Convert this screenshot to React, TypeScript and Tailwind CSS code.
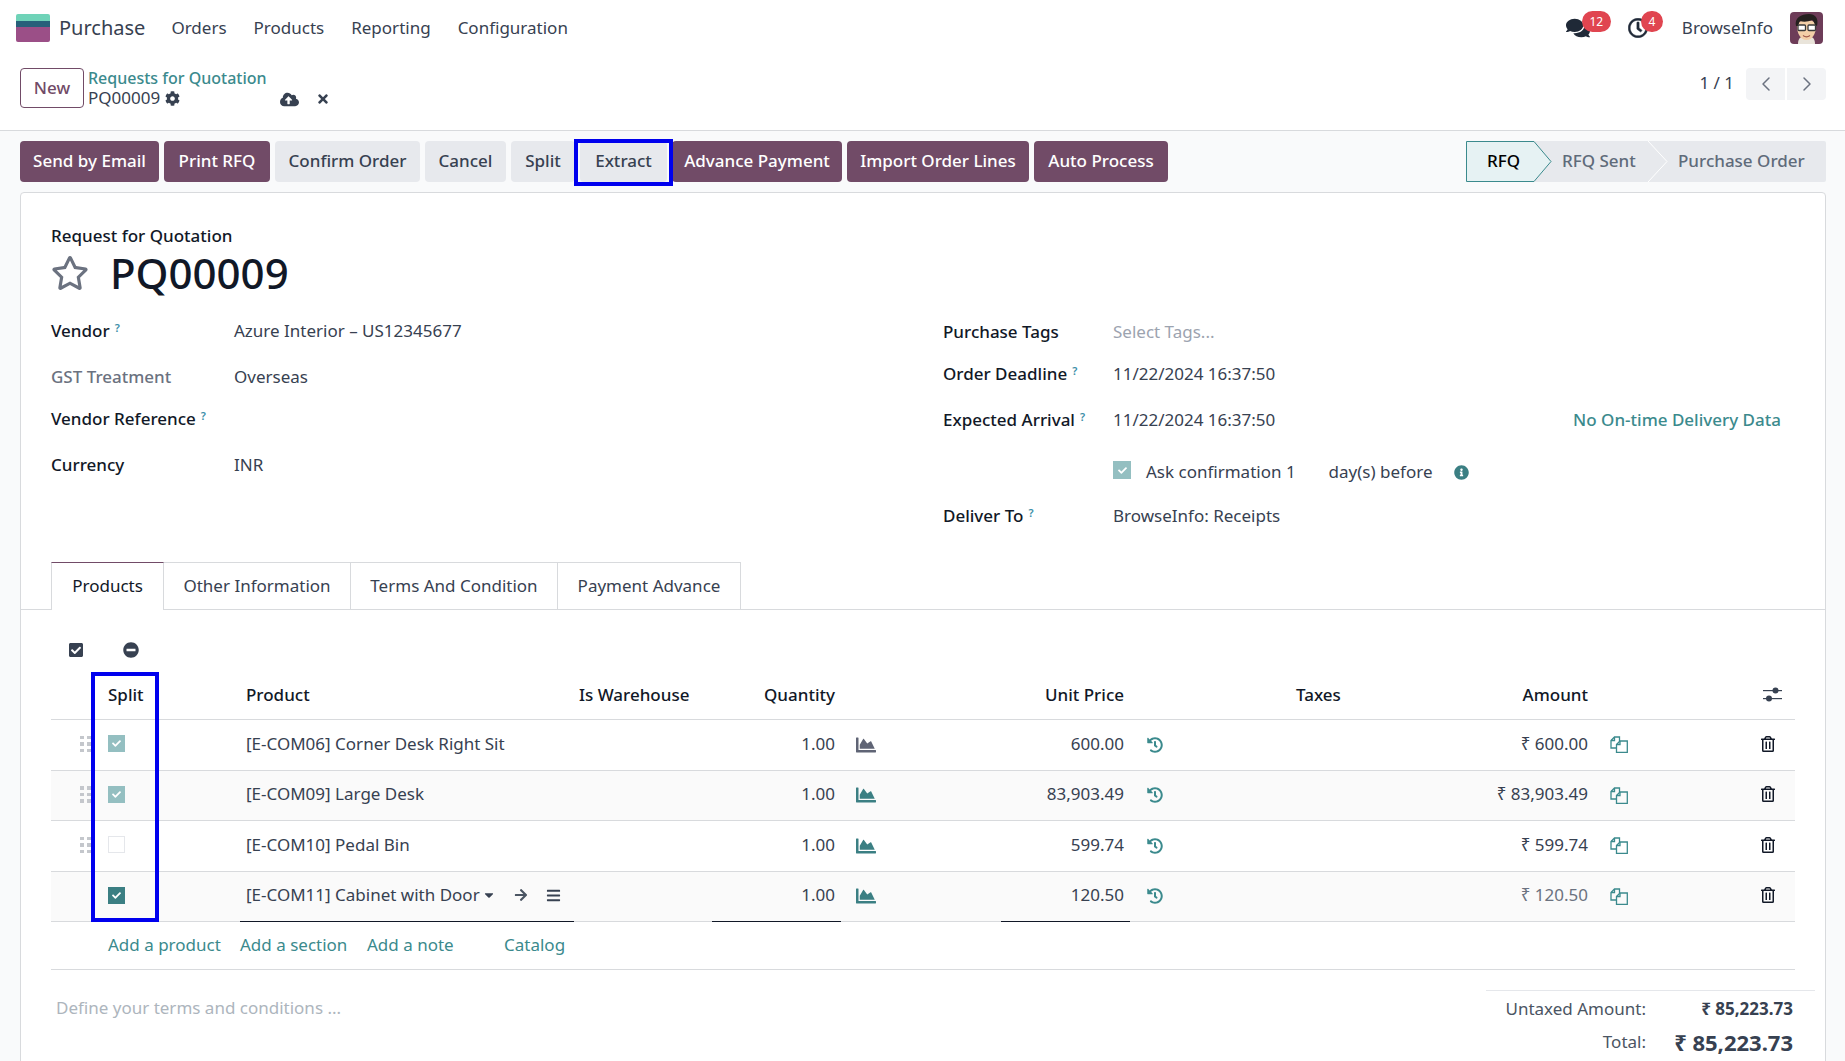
import React from "react";
import { FaCog, FaCloudUploadAlt, FaTimes, FaRegStar, FaComments, FaRegClock, FaInfoCircle, FaCheckSquare, FaMinusCircle, FaChartArea, FaHistory, FaRegTrashAlt, FaArrowRight, FaBars, FaCaretDown, FaCheck } from "react-icons/fa";
import { ChevronLeft, ChevronRight } from "lucide-react";

const Logo = () => (
  <svg width="34" height="28" viewBox="0 0 34 28" className="block shrink-0">
    <path d="M0 2a2 2 0 0 1 2-2h30a2 2 0 0 1 2 2v7H0z" fill="#6fd3b8" />
    <rect x="0" y="7" width="34" height="7" fill="#27607a" />
    <path d="M0 13h34v13a2 2 0 0 1-2 2H2a2 2 0 0 1-2-2z" fill="#9b4f87" />
  </svg>
);

const Avatar = () => (
  <svg width="33" height="32" viewBox="0 0 33 32" className="block rounded-[4px]">
    <rect width="33" height="32" fill="#6d3c58" />
    <path d="M8 32c0-6 3-8 8.500-8S25 26 25 32z" fill="#e9e4da" />
    <path d="M7 14c0 8 4 14 9.500 14S26 22 26 14s-18-8-19 0z" fill="#f3cfa8" />
    <path d="M6 14C4 6 11 2 19 2c6 0 10 4 8 12l-2-1c-1-3-2-5-3-5-4 2-9 2-12 1-1 1-1 3-2 5z" fill="#25201f" />
    <rect x="8" y="13" width="7.500" height="5.500" rx="1" fill="#fff" stroke="#3a3a3a" strokeWidth="1.300" />
    <rect x="18" y="13" width="7.500" height="5.500" rx="1" fill="#fff" stroke="#3a3a3a" strokeWidth="1.300" />
    <path d="M13 23.500c2 1.500 5 1.500 7 0" fill="none" stroke="#a05a4a" strokeWidth="1.200" />
  </svg>
);

const Copy = () => (
  <svg width="18" height="17" viewBox="0 0 18 17" fill="none" stroke="#3b8a8d" strokeWidth="1.300" className="block shrink-0">
    <path d="M6 12H1V4.500L4.500 1H9.500V5" />
    <path d="M4.500 1v3.500H1" />
    <path d="M6.500 16.300V8.500L10 5h7.300v11.300z" />
    <path d="M10 5v3.500H6.500" />
  </svg>
);

const Adjust = () => (
  <svg width="19" height="15" viewBox="0 0 19 15" className="block" fill="#374151">
    <rect x="0" y="3" width="19" height="1.200" />
    <circle cx="12.500" cy="3.500" r="3" />
    <rect x="0" y="11" width="19" height="1.200" />
    <circle cx="6" cy="11.500" r="3" />
  </svg>
);

const Check = ({ faded, size }: { faded?: boolean; size?: string }) => (
  <span className={`flex shrink-0 items-center justify-center ${size ?? "h-[17px] w-[17px]"} ${faded ? "bg-[#94bfc1]" : "bg-[#3b7f83]"}`}>
    <FaCheck className="text-[9px] text-white" />
  </span>
);

const Help = () => <sup className="ml-[5px] text-[11px] font-semibold text-[#3b8ea8]">?</sup>;

const Label = ({ children, help, muted }: { children: React.ReactNode; help?: boolean; muted?: boolean }) => (
  <span className={`w-[183px] shrink-0 font-medium ${muted ? "text-[#6b7280]" : "text-[#111827]"}`}>
    {children}
    {help && <Help />}
  </span>
);

const RLabel = ({ children, help }: { children: React.ReactNode; help?: boolean }) => (
  <span className="w-[170px] shrink-0 font-medium text-[#111827]">
    {children}
    {help && <Help />}
  </span>
);

const rows = [
  { name: "[E-COM06] Corner Desk Right Sit", price: "600.00", amount: "₹ 600.00", check: "faded", stripe: false, chart: "text-[#5f6475]" },
  { name: "[E-COM09] Large Desk", price: "83,903.49", amount: "₹ 83,903.49", check: "faded", stripe: true, chart: "text-[#3b7f83]" },
  { name: "[E-COM10] Pedal Bin", price: "599.74", amount: "₹ 599.74", check: "none", stripe: false, chart: "text-[#3b7f83]" },
  { name: "[E-COM11] Cabinet with Door", price: "120.50", amount: "₹ 120.50", check: "solid", stripe: true, chart: "text-[#3b7f83]", editing: true },
];

const Btn = ({ children, primary, w }: { children: React.ReactNode; primary?: boolean; w: string }) => (
  <button className={`flex h-[41px] shrink-0 items-center justify-center rounded-[4px] pb-[1px] font-medium ${w} ${primary ? "bg-[#714b67] text-white" : "bg-[#e7e9ed] text-[#374151]"}`}>
    {children}
  </button>
);

export default function App() {
  return (
    <div className="relative h-[1061px] w-[1845px] overflow-hidden bg-[#f9fafb] font-['Noto_Sans',sans-serif] text-[17px] leading-[24px] text-[#374151]">
      {/* top nav */}
      <nav className="flex h-[56px] items-center bg-white pl-[16px] pr-[22px]">
        <Logo />
        <span className="ml-[9px] text-[20px] text-[#374151]">Purchase</span>
        <div className="ml-[26px] flex gap-[27px] text-[#374151]">
          <span>Orders</span>
          <span>Products</span>
          <span>Reporting</span>
          <span>Configuration</span>
        </div>
        <div className="ml-auto flex items-center">
          <div className="relative">
            <FaComments className="text-[24px] text-[#1f2937]" />
            <span className="absolute left-[16px] top-[-5px] flex h-[21px] w-[29px] items-center justify-center rounded-full bg-[#e04550] text-[12px] text-white">12</span>
          </div>
          <div className="relative ml-[38px]">
            <FaRegClock strokeWidth={14} className="text-[20px] text-[#1f2937]" />
            <span className="absolute left-[13px] top-[-7px] flex h-[21px] w-[22px] items-center justify-center rounded-full bg-[#e04550] text-[12px] text-white">4</span>
          </div>
          <span className="ml-[34px] text-[#374151]">BrowseInfo</span>
          <span className="ml-[17px]"><Avatar /></span>
        </div>
      </nav>

      {/* breadcrumb bar */}
      <div className="flex h-[75px] border-b border-[#d8dadd] bg-white pl-[20px] pr-[19px]">
        <button className="mt-[12px] flex h-[40px] w-[64px] items-center justify-center rounded-[4px] border border-[#714b67] font-medium text-[#714b67]">New</button>
        <div className="ml-[4px] mt-[12px] leading-[20px]">
          <div className="text-[16px] font-medium text-[#3b8a8d]">Requests for Quotation</div>
          <div className="flex items-center gap-[5px] text-[#374151]">PQ00009 <FaCog className="text-[15px]" /></div>
        </div>
        <FaCloudUploadAlt className="ml-[13px] mt-[34px] text-[19px] text-[#374151]" />
        <FaTimes className="ml-[17px] mt-[36px] text-[14px] text-[#374151]" />
        <div className="ml-auto mt-[12px] flex items-start">
          <span className="mr-[12px] mt-[3px] text-[#374151]">1 / 1</span>
          <button className="flex h-[32px] w-[39px] items-center justify-center rounded-l-[4px] bg-[#f3f4f6]"><ChevronLeft size={24} strokeWidth={1.500} className="text-[#6b7280]" /></button>
          <button className="ml-[2px] flex h-[32px] w-[39px] items-center justify-center rounded-r-[4px] bg-[#f3f4f6]"><ChevronRight size={24} strokeWidth={1.500} className="text-[#6b7280]" /></button>
        </div>
      </div>

      {/* action toolbar */}
      <div className="flex h-[61px] items-start pl-[20px] pr-[19px] pt-[10px]">
        <div className="flex gap-[5px]">
          <Btn primary w="w-[139px]">Send by Email</Btn>
          <Btn primary w="w-[106px]">Print RFQ</Btn>
          <Btn w="w-[145px]">Confirm Order</Btn>
          <Btn w="w-[81px]">Cancel</Btn>
          <Btn w="w-[64px]">Split</Btn>
          <span className="relative">
            <Btn w="w-[87px]">Extract</Btn>
            <span className="absolute bottom-[-4px] left-[-6px] right-[-6px] top-[-2px] border-[4px] border-[#0000ee]" />
          </span>
          <Btn primary w="w-[170px]">Advance Payment</Btn>
          <Btn primary w="w-[182px]">Import Order Lines</Btn>
          <Btn primary w="w-[134px]">Auto Process</Btn>
        </div>
        <div className="ml-auto flex h-[41px] items-stretch rounded-[2px] bg-[#e7e9ed] pb-[1px] font-medium text-[#5f6b7a]">
          <div className="relative flex w-[85px] items-center pl-[21px] text-black">
            <svg width="86" height="41" viewBox="0 0 86 41" className="absolute left-0 top-0">
              <path d="M.5.5H68L85 20.500 68 40.500H.5z" fill="#e6f2f3" stroke="#3b8a8d" />
            </svg>
            <span className="relative">RFQ</span>
          </div>
          <div className="flex w-[97px] items-center pl-[11px]">RFQ Sent</div>
          <div className="relative flex w-[178px] items-center pl-[30px]">
            <svg width="20" height="41" viewBox="0 0 20 41" className="absolute left-0 top-0">
              <path d="M0 0 19 20.500 0 41" fill="none" stroke="#fff" />
            </svg>
            Purchase Order
          </div>
        </div>
      </div>

      {/* sheet */}
      <div className="ml-[20px] mr-[19px] h-[900px] rounded-t-[4px] border border-[#d8dadd] bg-white pt-[31px]">
        <div className="pl-[30px]">
          <div className="font-medium leading-[24px] text-[#111827]">Request for Quotation</div>
          <div className="mt-[3px] flex h-[44px] items-center">
            <FaRegStar className="text-[38px] text-[#6b7280]" />
            <span className="ml-[21px] text-[42px] font-medium leading-[44px] text-[#111827]">PQ00009</span>
          </div>
        </div>

        <div className="mt-[13px] flex pl-[30px]">
          <div className="w-[892px]">
            <div className="flex h-[46px] items-center"><Label help>Vendor</Label>Azure Interior – US12345677</div>
            <div className="flex h-[46px] items-center"><Label muted>GST Treatment</Label>Overseas</div>
            <div className="flex h-[38px] items-center"><Label help>Vendor Reference</Label></div>
            <div className="flex h-[54px] items-center"><Label>Currency</Label>INR</div>
          </div>
          <div className="w-[838px]">
            <div className="flex h-[48px] items-center"><RLabel>Purchase Tags</RLabel><span className="text-[#9ca3af]">Select Tags...</span></div>
            <div className="flex h-[36px] items-center"><RLabel help>Order Deadline</RLabel>11/22/2024 16:37:50</div>
            <div className="flex h-[56px] items-center">
              <RLabel help>Expected Arrival</RLabel>11/22/2024 16:37:50
              <span className="ml-auto font-medium text-[#3b8a8d]">No On-time Delivery Data</span>
            </div>
            <div className="flex h-[48px] items-center pl-[170px]">
              <span className="mb-[4px]"><Check faded size="h-[18px] w-[18px]" /></span>
              <span className="ml-[15px] pb-[1px]">Ask confirmation 1</span>
              <span className="ml-[33px] pb-[1px]">day(s) before</span>
              <FaInfoCircle className="ml-[22px] text-[15px] text-[#3b7f83]" />
            </div>
            <div className="flex h-[40px] items-center"><RLabel help>Deliver To</RLabel>BrowseInfo: Receipts</div>
          </div>
        </div>

        {/* tabs */}
        <div className="mt-[26px] flex h-[48px] items-stretch border-b border-[#d8dadd] pl-[30px]">
          <div className="mb-[-1px] flex w-[113px] items-center justify-center border-x border-t border-x-[#d8dadd] border-t-[#714b67] bg-white pb-[1px] text-[#111827]">Products</div>
          <div className="flex w-[187px] items-center justify-center border-r border-t border-[#d8dadd] pb-[1px]">Other Information</div>
          <div className="flex w-[207px] items-center justify-center border-r border-t border-[#d8dadd] pb-[1px]">Terms And Condition</div>
          <div className="flex w-[183px] items-center justify-center border-r border-t border-[#d8dadd] pb-[1px]">Payment Advance</div>
        </div>

        {/* table */}
        <div className="relative mx-[30px] mt-[32px] w-[1744px]">
          <div className="flex h-[16px] items-center pl-[17px] text-[#374151]">
            <FaCheckSquare className="shrink-0 text-[16px]" />
            <FaMinusCircle className="ml-[39px] shrink-0 text-[16px]" />
          </div>
          <div className="mt-[14px] flex h-[48px] items-center border-b border-[#d8dadd] pb-[2px] font-medium text-[#111827]">
            <span className="w-[57px] shrink-0" />
            <span className="w-[138px] shrink-0">Split</span>
            <span className="w-[333px] shrink-0">Product</span>
            <span className="w-[150px] shrink-0">Is Warehouse</span>
            <span className="w-[106px] shrink-0 text-right">Quantity</span>
            <span className="w-[289px] shrink-0 text-right">Unit Price</span>
            <span className="ml-[172px] w-[170px] shrink-0">Taxes</span>
            <span className="w-[122px] shrink-0 text-right">Amount</span>
            <span className="ml-auto pr-[13px]"><Adjust /></span>
          </div>
          {rows.map((r) => (
            <div key={r.name} className={`flex h-[50.5px] items-center border-b border-[#d8dadd] ${r.stripe ? "bg-[#fafafa]" : ""}`}>
              <span className="grid w-[57px] shrink-0 justify-end pb-[2px] pr-[17px]">
                {!r.editing && (
                  <span className="grid grid-cols-2 gap-x-[3px] gap-y-[3px]">
                    {[0, 1, 2, 3, 4, 5].map((i) => <i key={i} className="block h-[3.500px] w-[4px] bg-[#c4c7cc]" />)}
                  </span>
                )}
              </span>
              <span className="w-[132px] shrink-0 pb-[2px]">
                {r.check === "none" ? <span className="block h-[17px] w-[17px] border border-[#e5e7eb] bg-white" /> : <Check faded={r.check === "faded"} />}
              </span>
              <span className="relative flex h-full w-[334px] shrink-0 items-center whitespace-nowrap pb-[2px] pl-[6px]">
                {r.name}
                {r.editing && (
                  <>
                    <FaCaretDown className="ml-[2px] shrink-0 text-[14px] text-[#374151]" />
                    <FaArrowRight className="ml-[18px] shrink-0 text-[14px] text-[#4b5563]" />
                    <FaBars className="ml-[18px] shrink-0 text-[15px] text-[#374151]" />
                    <span className="absolute bottom-[-1px] left-0 right-0 h-[1px] bg-[#111827]" />
                  </>
                )}
              </span>
              <span className="w-[138px] shrink-0" />
              <span className="relative flex h-full w-[129px] shrink-0 items-center justify-end pb-[2px] pr-[6px]">
                1.00
                {r.editing && <span className="absolute bottom-[-1px] left-0 right-0 h-[1px] bg-[#111827]" />}
              </span>
              <FaChartArea className={`ml-[15px] shrink-0 text-[20px] ${r.chart}`} />
              <span className="relative ml-[125px] flex h-full w-[129px] shrink-0 items-center justify-end pb-[2px] pr-[6px]">
                {r.price}
                {r.editing && <span className="absolute bottom-[-1px] left-0 right-0 h-[1px] bg-[#111827]" />}
              </span>
              <FaHistory className="ml-[17px] shrink-0 text-[16px] text-[#3b8a8d]" />
              <span className={`w-[425px] shrink-0 pb-[2px] text-right ${r.editing ? "text-[#6b7280]" : ""}`}>{r.amount}</span>
              <span className="ml-[22px] shrink-0"><Copy /></span>
              <FaRegTrashAlt className="mb-[2px] ml-[132px] shrink-0 text-[16px] text-[#111827]" />
            </div>
          ))}
          <div className="flex h-[48px] items-center border-b border-[#d8dadd] pb-[2px] pl-[57px] text-[#3b8a8d]">
            <span className="w-[132px] shrink-0 whitespace-nowrap">Add a product</span>
            <span className="w-[127px] shrink-0 whitespace-nowrap">Add a section</span>
            <span className="w-[137px] shrink-0 whitespace-nowrap">Add a note</span>
            <span>Catalog</span>
          </div>
          <span className="absolute left-[40px] top-[30px] h-[250px] w-[68px] border-[4px] border-[#0000ee]" />
        </div>

        {/* footer */}
        <div className="mx-[30px] mt-[20px] flex w-[1764px] items-start">
          <span className="ml-[5px] mt-[6px] text-[#adb5bd]">Define your terms and conditions ...</span>
          <div className="ml-auto w-[329px] border-t border-[#e5e7eb]">
            <div className="flex h-[36px] items-center">
              <span className="w-[160px] text-right text-[#4b5563]">Untaxed Amount:</span>
              <span className="w-[147px] text-right font-bold">₹ 85,223.73</span>
            </div>
            <div className="flex h-[30px] items-center">
              <span className="w-[160px] text-right text-[#4b5563]">Total:</span>
              <span className="w-[147px] text-right text-[22px] font-bold">₹ 85,223.73</span>
            </div>
          </div>
        </div>
      </div>
    </div>
  );
}
